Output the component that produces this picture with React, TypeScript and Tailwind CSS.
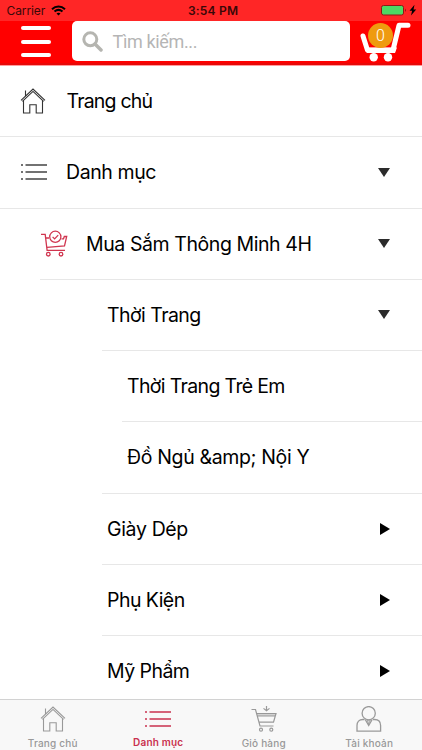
import type { ReactNode } from "react";

interface IconProps {
  className?: string;
}

function HomeIcon({ className }: IconProps) {
  return (
    <svg className={className} width="26" height="26" viewBox="0 0 26 26" fill="none" stroke="currentColor" strokeWidth="1.1">
      <path d="M1 12.4 13 1l12 11.400M2.400 13.400 13 3.400l10.600 10" />
      <path d="M5.500 8V2.500M3.500 12.500v12.500h6.300v-8.300h6.400v8.300h6.300V12.500" />
    </svg>
  );
}

function ListIcon({ className, bold }: IconProps & { bold?: boolean }) {
  return (
    <svg className={className} width="26" height="18" viewBox="0 0 26 18" stroke="currentColor" strokeWidth={bold ? 1.7 : 1.3}>
      <path d="M0 2h2M0 9h2M0 16h2M4.5 2H26M4.5 9H26M4.5 16H26" />
    </svg>
  );
}

function CheckCartIcon({ className }: IconProps) {
  return (
    <svg className={className} width="28" height="28" viewBox="0 0 28 28" fill="none" stroke="currentColor" strokeWidth="1.3">
      <path d="M1 4.3h4.200l1.900 16H25M5.700 8h3.300M7 17.300l17.500-1.300 2.200-9.500h-2.400l-.8 2.300H21.500" />
      <circle cx="15.300" cy="6.800" r="5.600" />
      <path d="m12.600 6.900 2 2 3.600-3.800" />
      <circle cx="8.300" cy="24.200" r="1.800" />
      <circle cx="21" cy="24.200" r="1.800" />
    </svg>
  );
}

function BasketIcon({ className }: IconProps) {
  return (
    <svg className={className} width="26" height="26" viewBox="0 0 26 26" fill="none" stroke="currentColor" strokeWidth="1.2">
      <path d="M.5 3.500h4l4.500 16.500H22.500M5.500 7.500H25l-2.500 8.700H8M6.300 10h18M15.500 0v4.600M12.500 2.400l3 2.400 3-2.400" />
      <path d="M5.500 7.500H25l-.7 2.500h-18z" fill="currentColor" fillOpacity="0.4" stroke="none" />
      <circle cx="10" cy="23.700" r="1.500" />
      <circle cx="20.300" cy="23.700" r="1.500" />
    </svg>
  );
}

function UserIcon({ className }: IconProps) {
  return (
    <svg className={className} width="26" height="26" viewBox="0 0 26 26" fill="none" stroke="currentColor" strokeWidth="1.300">
      <circle cx="12.700" cy="7.200" r="6.600" />
      <path d="M8.500 13.500H7C3 13.500 1 16 1 19.500v5.700h23.600v-5.700c0-3.500-2-6-6-6H17M9.200 13.500l3.500 6 3.500-6" />
      <path d="M11 14h3.400l-1.700 4z" fill="currentColor" fillOpacity="0.3" strokeWidth=".8" />
    </svg>
  );
}

function StatusBar() {
  return (
    <div className="relative flex h-[21px] items-center justify-between bg-[#ff2626] pl-[6.500px] pr-[4px] text-[#3a0808]">
      <div className="flex items-center gap-[6px]">
        <span className="text-[12px] tracking-[-0.1px]">Carrier</span>
        <svg width="15" height="11" viewBox="0 0 15 11" fill="none" stroke="black" strokeWidth="2">
          <path d="M1 4.200C4.800.600 10.200.600 14 4.200M3.500 6.600c2.400-2.100 5.600-2.100 8 0" />
          <path d="m7.500 10.500-2-2c1.200-1 2.800-1 4 0z" fill="black" stroke="none" />
        </svg>
      </div>
      <span className="absolute left-[188px] text-[12px] font-semibold tracking-[0.2px]">3:54 PM</span>
      <svg width="38" height="13" viewBox="0 0 38 13">
        <rect x="1.500" y="1.500" width="22" height="9.500" rx="2" fill="#4cd964" stroke="#8d1717" />
        <path d="M25 4.500q1.800 1.700 0 3.500z" fill="#6d1212" />
        <path d="m34.500.800-5 6h2.600L31 11.600l5.200-6.200h-2.700z" fill="black" />
      </svg>
    </div>
  );
}

function Header() {
  return (
    <div className="flex h-[45px] items-start border-b border-[#ff9c9c] bg-[#ff0000] pl-[21px] shadow-[inset_0_-2px_#e80808]">
      <div className="mt-[5px] flex w-[30px] flex-col gap-[9.500px]">
        <div className="h-[4px] rounded-full bg-white" />
        <div className="h-[4px] rounded-full bg-white" />
        <div className="h-[4px] rounded-full bg-white" />
      </div>
      <div className="ml-[21px] flex h-[40px] w-[278px] items-center rounded-[5px] bg-white pl-[10px]">
        <svg width="21" height="21" viewBox="0 0 21 21" fill="none" stroke="#b5b5b0" strokeWidth="3">
          <circle cx="8.300" cy="8.300" r="6.500" />
          <path d="m13 13 6 6" strokeWidth="3.500" strokeLinecap="round" />
        </svg>
        <span className="ml-[9.500px] font-[Roboto] text-[18px] tracking-[-0.350px] text-[#b5b5b5]">Tìm kiếm...</span>
      </div>
      <div className="relative ml-[9px]">
        <svg width="54" height="41" viewBox="0 0 54 41" fill="none" stroke="white" strokeWidth="5" strokeLinecap="round" strokeLinejoin="round">
          <path d="m4 15 4.500 14.200H34L40 4.300h9" />
          <path d="M6 26.500 8 32h28l2-5.500z" fill="white" stroke="none" />
          <circle cx="14.700" cy="36.200" r="4.200" fill="white" stroke="none" />
          <circle cx="29" cy="36.200" r="4.200" fill="white" stroke="none" />
        </svg>
        <span className="absolute left-[9px] top-[2px] flex size-[25px] items-center justify-center rounded-full bg-[#ef9b0f] font-[Roboto] text-[16px] font-light text-white">
          0
        </span>
      </div>
    </div>
  );
}

interface RowProps {
  label: string;
  className: string;
  labelClass: string;
  icon?: ReactNode;
  arrow?: "down" | "right";
}

function Row({ label, className, labelClass, icon, arrow }: RowProps) {
  return (
    <div className={`flex h-[71.250px] shrink-0 items-center border-b border-[#e7e7e7] ${className}`}>
      {icon}
      <span className={`whitespace-nowrap text-[19.500px] leading-[26px] ${labelClass}`}>{label}</span>
      {arrow == "down" && (
        <svg className="ml-auto mr-[32px]" width="12" height="9" viewBox="0 0 12 9">
          <path d="M0 0h12L6 9z" fill="#2b2b2b" />
        </svg>
      )}
      {arrow == "right" && (
        <svg className="ml-auto mr-[32px]" width="10" height="12" viewBox="0 0 10 12">
          <path d="M0 0v12l10-6z" fill="black" />
        </svg>
      )}
    </div>
  );
}

interface TabProps {
  label: string;
  icon: ReactNode;
  active?: boolean;
}

function Tab({ label, icon, active }: TabProps) {
  return (
    <div className={`flex flex-1 flex-col items-center ${active ? "font-semibold text-[#c9304e]" : "font-medium text-[#999999]"}`}>
      <div className="mt-[6px] flex h-[26px] items-center">{icon}</div>
      <span className="mt-[3px] text-[10px] leading-[16px] tracking-[0.2px]">{label}</span>
    </div>
  );
}

export default function App() {
  return (
    <div className="flex h-[750px] w-[422px] flex-col overflow-hidden bg-white font-[Inter,sans-serif] text-black">
      <StatusBar />
      <Header />
      <div className="flex h-[633px] flex-col overflow-hidden">
        <Row label="Trang chủ" className="pl-[20px]" labelClass="ml-[20.500px] tracking-[-0.800px]" icon={<HomeIcon className="text-[#333333]" />} />
        <Row label="Danh mục" className="pl-[21px]" labelClass="ml-[19px] tracking-[-0.400px]" icon={<ListIcon className="text-[#444444]" />} arrow="down" />
        <Row label="Mua Sắm Thông Minh 4H" className="ml-[40px]" labelClass="ml-[18px] tracking-[-0.420px]" icon={<CheckCartIcon className="text-[#d0354f]" />} arrow="down" />
        <Row label="Thời Trang" className="ml-[102px]" labelClass="ml-[5px] tracking-[-0.550px]" arrow="down" />
        <Row label="Thời Trang Trẻ Em" className="ml-[122px]" labelClass="ml-[5px] tracking-[-0.650px]" />
        <Row label="Đồ Ngủ &amp;amp; Nội Y" className="ml-[102px]" labelClass="ml-[25px] tracking-[-0.350px]" />
        <Row label="Giày Dép" className="ml-[102px]" labelClass="ml-[5px] tracking-[-0.350px]" arrow="right" />
        <Row label="Phụ Kiện" className="ml-[102px]" labelClass="ml-[5px] tracking-[-0.550px]" arrow="right" />
        <Row label="Mỹ Phẩm" className="ml-[102px]" labelClass="ml-[5px] tracking-[-0.550px]" arrow="right" />
      </div>
      <div className="flex h-[51px] border-t border-[#d2d2d2] bg-[#f8f8f8]">
        <Tab label="Trang chủ" icon={<HomeIcon />} />
        <Tab label="Danh mục" icon={<ListIcon bold />} active />
        <Tab label="Giỏ hàng" icon={<BasketIcon />} />
        <Tab label="Tài khoản" icon={<UserIcon />} />
      </div>
    </div>
  );
}
